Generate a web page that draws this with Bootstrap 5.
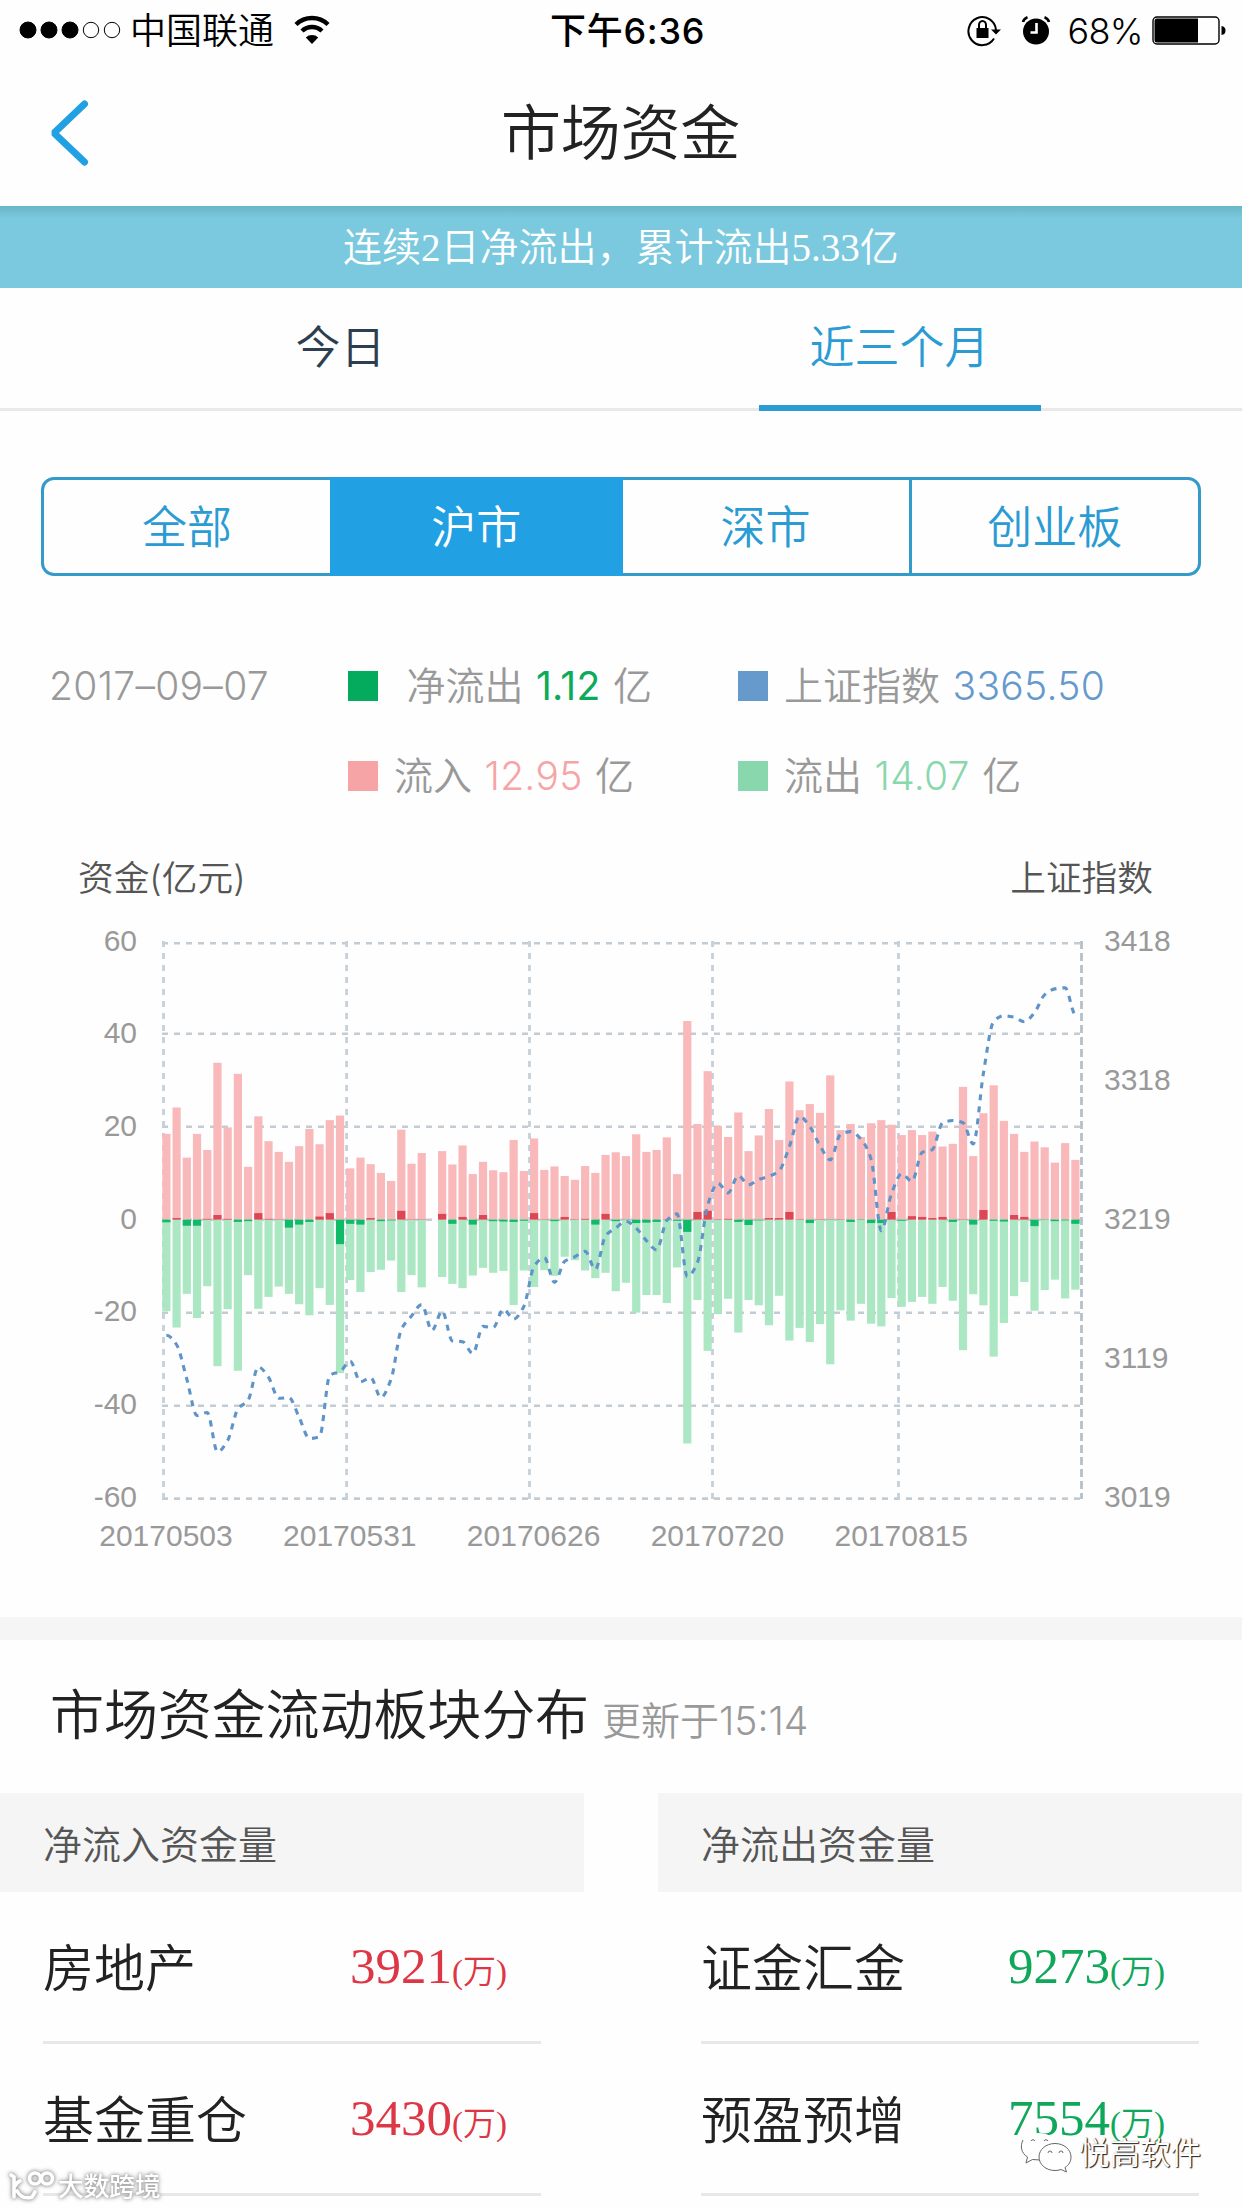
<!DOCTYPE html>
<html lang="zh-CN">
<head>
  <meta charset="UTF-8">
  <meta name="viewport" content="width=device-width, initial-scale=1.0">
  <title>市场资金</title>
  <link href="https://cdn.jsdelivr.net/npm/bootstrap@5.3.2/dist/css/bootstrap.min.css" rel="stylesheet">
  <style>
    body { font-family: Inter, "Noto Sans CJK SC", sans-serif; font-weight: 350; color: #222; background: #fefefe; line-height: 1; overflow: hidden; }
    svg { display: block; flex: none; }
    .screen { width: 1242px; height: 2208px; overflow: hidden; }
    .status-bar { height: 60px; padding: 2px 15px 0 18px; font-size: 36px; color: #000; }
    .status-bar .side { width: 532px; }
    .clock { font-weight: 500; letter-spacing: .7px; }
    .percent { margin: 0 9px 0 14px; letter-spacing: -.6px; }
    .title-bar { height: 146px; padding-left: 48px; }
    .title-bar h1 { font-size: 60px; font-weight: 350; letter-spacing: -.3px; padding: 0 91px 0 0; }
    .notice { height: 82px; background: linear-gradient(#6bb5c7, #7ac9de 12px); color: #fff; font: 350 39px/84px "Liberation Serif", "Noto Sans CJK SC", serif; }
    .period-tabs { height: 123px; padding: 0 63px 0 61px; border-bottom: 3px solid #e9e9e9; font-size: 45px; }
    .period-tabs .nav-item .nav-link { height: 123px; flex: none; width: 282px; padding: 0; line-height: 120px; color: #2c3e50; border-bottom: 6px solid transparent; }
    .period-tabs .nav-item .nav-link.active { color: #2b9bd3; border-color: #2b9bd3; }
    .markets { margin: 66px 41px 0 41px; height: 99px; }
    .markets .btn { --bs-btn-color: #2b9bd3; --bs-btn-border-color: #349ac9; --bs-btn-active-bg: #21a0e4; --bs-btn-active-border-color: #21a0e4; --bs-btn-active-color: #fff; --bs-btn-border-width: 3px; --bs-btn-border-radius: 13px; --bs-btn-font-size: 45px; --bs-btn-font-weight: 350; --bs-btn-padding-y: 0; flex: 1 1 0; line-height: 95px; }
    .markets.btn-group > .btn:not(:first-child) { margin-left: -3px; }
    .legend-grid { display: grid; grid-template-columns: 299px 390px 1fr; grid-auto-rows: 90px; margin: 65px 0 0 49px; font-size: 39px; color: #999; align-items: center; }
    .legend-grid span { white-space: pre; word-spacing: 1.5px; position: relative; top: -1px; }
    .legend-grid .num { font-weight: 350; letter-spacing: .3px; }
    .swatch { width: 30px; height: 30px; margin-right: 16px; flex: none; }
    .legend-grid .green { color: #0cab5c; font-weight: 400; }
    .blue { color: #6699cc; }
    .pink { color: #f6a4a5; }
    .mint { color: #89d7ad; }
    .axis-titles { height: 99px; padding: 17px 89px 0 78px; font-size: 35.7px; color: #555; }
    .axis-text { font: 400 30px "Liberation Sans", sans-serif; fill: #999; }
    .band { height: 23px; background: #f5f5f5; margin-top: 57px; }
    .sector-title { height: 153px; padding: 0 0 0 50px; }
    .sector-title h2 { font-size: 54px; font-weight: 350; margin: 0 13px 0 0; line-height: 152px; letter-spacing: -.1px; }
    .sector-title .updated { font-size: 39px; color: #999; line-height: 145px; }
    .flows { gap: 74px; }
    .flow-head { height: 99px; background: #f5f5f5; padding-left: 43px; font-size: 39px; line-height: 103px; color: #555; }
    .flow-row { margin: 0 43px; height: 152px; border-bottom: 3px solid #e8e8e8; }
    .flow-name { width: 307px; font-size: 51px; line-height: 153px; }
    .amount { font: 400 51px/149px "Liberation Serif", "Noto Sans CJK SC", serif; }
    .amount small { font-size: 33px; font-weight: 350; }
    .inflow { color: #dd3645; }
    .outflow { color: #10a75b; }
    .mark-left { left: 8px; top: 2170px; color: #fff; font-size: 25.7px; font-weight: 500; filter: drop-shadow(0 0 2px #999) drop-shadow(0 0 1px #bbb); }
    .mark-right { left: 1019px; top: 2130px; color: #fff; font-size: 30.5px; text-shadow: 1px 1px 1px #222, 1px 0 1px #555; }
  </style>
</head>
<body>
<div class="screen position-relative">

  <div class="status-bar d-flex align-items-center">
    <div class="side d-flex align-items-center">
      <svg width="104" height="20" viewBox="0 0 104 20" stroke="#000" stroke-width="1">
        <circle cx="10" cy="9" r="8"/><circle cx="31" cy="9" r="8"/><circle cx="52" cy="9" r="8"/>
        <circle cx="73" cy="9" r="7.7" fill="none"/><circle cx="94" cy="9" r="7.7" fill="none"/>
      </svg>
      <span class="ms-2">中国联通</span>
      <svg class="ms-3" width="44" height="32" viewBox="0 0 44 32" fill="none" stroke="#000" stroke-width="4.4">
        <path d="M6 9.500A23 23 0 0 1 38 9.500"/>
        <path d="M12 16A14.5 14.5 0 0 1 32 16"/>
        <path d="M22 29L15.8 22.4A9 9 0 0 1 28.2 22.4Z" fill="#000" stroke="none"/>
      </svg>
    </div>
    <span class="clock">下午6:36</span>
    <div class="d-flex align-items-center ms-auto">
      <svg width="36" height="34" viewBox="0 0 36 34">
        <path d="M29 16A13.8 14 0 1 0 27 24.5" fill="none" stroke="#000" stroke-width="2"/>
        <path d="M24 15.5H34L29 20.5Z"/>
        <path d="M9.5 14H21.5V24H9.5Z"/>
        <path d="M12 15V11A3.5 4 0 0 1 19 11V15" fill="none" stroke="#000" stroke-width="2"/>
      </svg>
      <svg class="ms-3" width="34" height="32" viewBox="0 0 34 32">
        <circle cx="17" cy="16.5" r="13"/>
        <path d="M4 7A7 7 0 0 1 8.5 2.2M30 7A7 7 0 0 0 25.500 2.2" fill="none" stroke="#000" stroke-width="2.6"/>
        <path d="M17.5 8V17.500H11.5" fill="none" stroke="#fff" stroke-width="2.6"/>
      </svg>
      <span class="percent">68%</span>
      <svg width="75" height="30" viewBox="0 0 75 30">
        <rect x="1" y="1" width="66" height="27" rx="4" fill="none" stroke="#000" stroke-width="1.4"/>
        <path d="M5 2.500H46V26.500H5Q2.500 26.500 2.500 24V5Q2.500 2.500 5 2.500Z"/>
        <path d="M69.500 10Q73.500 10.500 73.500 14.500T69.500 19Z"/>
      </svg>
    </div>
  </div>

  <header class="title-bar d-flex align-items-center">
    <svg width="42" height="70" viewBox="0 0 42 70" fill="none" stroke="#21a0e4" stroke-width="7" stroke-linecap="round"><path d="M36.500 6L6 35L36.500 64" stroke-linejoin="bevel"/></svg>
    <h1 class="flex-fill text-center mb-0">市场资金</h1>
  </header>

  <div class="notice text-center">连续2日净流出，累计流出5.33亿</div>

  <ul class="period-tabs nav nav-fill">
    <li class="nav-item d-flex justify-content-center w-50"><a class="nav-link" href="#">今日</a></li>
    <li class="nav-item d-flex justify-content-center w-50"><a class="nav-link active" href="#">近三个月</a></li>
  </ul>

  <div class="markets btn-group d-flex">
    <button class="btn">全部</button>
    <button class="btn active">沪市</button>
    <button class="btn">深市</button>
    <button class="btn">创业板</button>
  </div>

  <div class="legend-grid">
    <span class="num">2017–09–07</span>
    <div class="d-flex align-items-center"><i class="swatch" style="background:#04ab5c"></i><span> 净流出 <b class="num green">1.12</b> 亿</span></div>
    <div class="d-flex align-items-center"><i class="swatch" style="background:#6699cc"></i><span>上证指数 <b class="num blue">3365.50</b></span></div>
    <span></span>
    <div class="d-flex align-items-center"><i class="swatch" style="background:#f6a4a5"></i><span>流入 <b class="num pink">12.95</b> 亿</span></div>
    <div class="d-flex align-items-center"><i class="swatch" style="background:#89d7ad"></i><span>流出 <b class="num mint">14.07</b> 亿</span></div>
  </div>

  <div class="axis-titles d-flex justify-content-between align-items-center">
    <span>资金(亿元)</span><span>上证指数</span>
  </div>

  <svg id="flow_chart" width="1242" height="640" viewBox="0 920 1242 640"></svg>

  <div class="band"></div>
  <div class="sector-title d-flex align-items-start">
    <h2>市场资金流动板块分布</h2><span class="updated pt-2">更新于15:14</span>
  </div>

  <div class="flows d-flex">
    <div class="flex-fill w-50">
      <div class="flow-head">净流入资金量</div>
      <div class="flow-row d-flex"><div class="flow-name">房地产</div><div class="amount inflow">3921<small>(万)</small></div></div>
      <div class="flow-row d-flex"><div class="flow-name">基金重仓</div><div class="amount inflow">3430<small>(万)</small></div></div>
    </div>
    <div class="flex-fill w-50">
      <div class="flow-head">净流出资金量</div>
      <div class="flow-row d-flex"><div class="flow-name">证金汇金</div><div class="amount outflow">9273<small>(万)</small></div></div>
      <div class="flow-row d-flex"><div class="flow-name">预盈预增</div><div class="amount outflow">7554<small>(万)</small></div></div>
    </div>
  </div>

  <div class="mark-left position-absolute d-flex align-items-center">
    <svg width="50" height="34" viewBox="0 0 50 34" fill="none" stroke="#fff" stroke-width="3.6" stroke-linecap="round">
      <path d="M3 5L6 7V27M7 16Q9 12 12 11M9 21Q14 30 24 27L27 22"/>
      <circle cx="27" cy="8.500" r="5.500"/><circle cx="39" cy="8.500" r="5.500"/>
    </svg>
    <span>大数跨境</span>
  </div>
  <div class="mark-right position-absolute d-flex align-items-center">
    <svg width="60" height="46" viewBox="0 0 60 46" fill="#fff" stroke="#666" stroke-width="1">
      <path d="M20 3C9 3 2 9 2 16.500C2 21 4.500 24.500 8.500 27L7 33L13.500 29.500Q20 31 25 29.500C35 27 38 20 37 13C35 7 28 3 20 3Z" stroke="none"/>
      <path d="M4 10C1 16 2 23 8.500 27L7 33L13.500 29.500L21 30" fill="none"/>
      <path d="M36 13.500C27 13.500 20 19.500 20 27S27 40.500 36 40.500Q39 40.500 42 39.500L47.500 42L46 37.500C50 35 52 31.500 52 27C52 19.500 45 13.500 36 13.500Z"/>
      <path d="M12 11A2.200 2.200 0 0 1 16 11M25 11A2.200 2.200 0 0 1 29 11M29 23A2 2 0 0 1 33 23M40 23A2 2 0 0 1 44 23" fill="none"/>
    </svg>
    <span>悦高软件</span>
  </div>
</div>
<script src="https://cdn.jsdelivr.net/npm/bootstrap@5.3.2/dist/js/bootstrap.bundle.min.js"></script>
</body>
</html>

<script>

  // vertical levels of each trading day, zero line at ZERO, 0 means no bar
  var ZERO = 783;
  var inflow = [559,490,621,559,601,373,542,402,645,513,578,606,632,591,546,586,523,511,649,621,638,661,682,548,637,609,0,604,639,589,
    664,632,654,659,575,656,571,653,644,669,679,643,661,614,607,617,560,606,601,568,664,264,533,395,538,567,503,604,563,494,575,
    422,497,481,504,406,549,533,567,531,523,535,562,549,562,553,592,585,436,617,505,432,525,559,606,579,594,634,583,627];
  var outflow = [1022,1065,977,1040,957,1166,1017,1178,928,1016,985,958,977,1004,1033,962,1006,1184,941,972,920,914,890,972,928,960,0,933,951,962,
    929,909,922,917,1006,916,959,915,930,880,889,916,936,922,970,948,1026,980,980,1001,908,1368,993,1126,1030,990,1078,993,1007,1059,982,
    1099,1066,1103,1056,1161,1020,1047,1003,1055,1062,988,1011,998,985,1003,959,995,1124,978,1007,1141,1053,983,946,1021,967,940,989,966];
  var net = [-7,4,-16,-16,2,12,2,-6,-4,17,2,1,-21,-13,-6,8,17,-64,-11,-13,4,-4,-2,23,1,1,0,15,-11,7,
    -13,12,-4,-5,-6,-3,17,1,-4,7,1,2,-13,15,-4,-1,-9,-8,-6,1,-3,-32,20,23,1,2,-6,-14,-2,4,4,
    20,1,-9,1,-1,1,-6,-1,-9,-9,20,-3,9,7,4,7,-6,1,-13,25,-3,-5,12,7,-17,-1,-4,-2,-11];
  var index = [1085,1110,1200,1295,1287,1390,1360,1278,1255,1168,1195,1250,1248,1300,1355,1350,1190,1180,1153,1207,1196,1248,1200,1070,1035,1005,1073,1022,1100,1102,
    1133,1062,1065,1017,1043,1010,905,882,947,892,880,866,913,825,805,787,805,838,862,785,768,932,895,745,688,713,668,692,678,670,655,
    592,513,540,590,627,560,553,572,625,812,715,663,683,607,600,530,524,530,585,400,265,250,254,266,242,195,180,177,247];

  var chart = document.getElementById("flow_chart");
  draw_chart();

  function level(z) { return 920 + z / 2.6133; }
  function day(i) { return 166.4 + i * 10.213; }

  function add(tag, attrs, text) {
    var el = document.createElementNS("http://www.w3.org/2000/svg", tag);
    for (var key in attrs) el.setAttribute(key, attrs[key]);
    if (text) el.textContent = text;
    chart.appendChild(el);
  }

  function bar(i, from, to, color) {
    if (to <= from) return;
    add("rect", { x: day(i) - 4.1, width: 8.2, y: level(from), height: (to - from) / 2.6133, fill: color });
  }

  function draw_chart() {
    [943.3, 1033.7, 1126.7, 1219.7, 1312.7, 1405.7, 1498.6].forEach((y) => {
      add("path", { d: "M162 " + y + "H1082", stroke: "#c3ccd3", "stroke-width": 2.6, "stroke-dasharray": "6 6" });
    });
    [163.5, 346.6, 529.5, 712.5, 898.5].forEach((x) => {
      add("path", { d: "M" + x + " 941V1499", stroke: "#c5d0da", "stroke-width": 2.8, "stroke-dasharray": "6 6" });
    });
    add("path", { d: "M1081.500 941V1499", stroke: "#b4c0ca", "stroke-width": 2.8, "stroke-dasharray": "8 4" });

    inflow.forEach((top, i) => {
      if (!top) return;
      bar(i, top, ZERO, "rgba(249,183,184,.97)");
      bar(i, ZERO, outflow[i], "rgba(168,230,193,.97)");
      bar(i, ZERO - net[i], ZERO, "#dd4652");
      bar(i, ZERO, ZERO - net[i], "#0fba68");
    });

    add("path", { d: smooth(index), fill: "none", stroke: "#5f94c8", "stroke-width": 3.1, "stroke-dasharray": "6 6" });

    ["60", "40", "20", "0", "-20", "-40", "-60"].forEach((t, i) => {
      add("text", { x: 137, y: 950.5 + i * 92.7, "text-anchor": "end", class: "axis-text" }, t);
    });
    ["3418", "3318", "3219", "3119", "3019"].forEach((t, i) => {
      add("text", { x: 1104, y: 950.5 + i * 139.05, class: "axis-text" }, t);
    });
    ["20170503", "20170531", "20170626", "20170720", "20170815"].forEach((t, i) => {
      add("text", { x: 166 + i * 183.8, y: 1546, "text-anchor": "middle", class: "axis-text" }, t);
    });
  }

  // monotone cubic through all the points, flat at each peak and dip
  function smooth(values) {
    var ys = values.map(level);
    var slope = ys.map((y, i) => {
      if (i == 0 || i == ys.length - 1) return 0;
      var a = y - ys[i - 1], b = ys[i + 1] - y;
      return a * b <= 0 ? 0 : 2 * a * b / (a + b);
    });
    var d = "M" + day(0) + " " + ys[0];
    for (var i = 1; i < ys.length; i++) {
      d += "C" + (day(i - 1) + 3.4) + " " + (ys[i - 1] + slope[i - 1] / 3) + " " + (day(i) - 3.4) + " " + (ys[i] - slope[i] / 3) + " " + day(i) + " " + ys[i];
    }
    return d;
  }

</script>
